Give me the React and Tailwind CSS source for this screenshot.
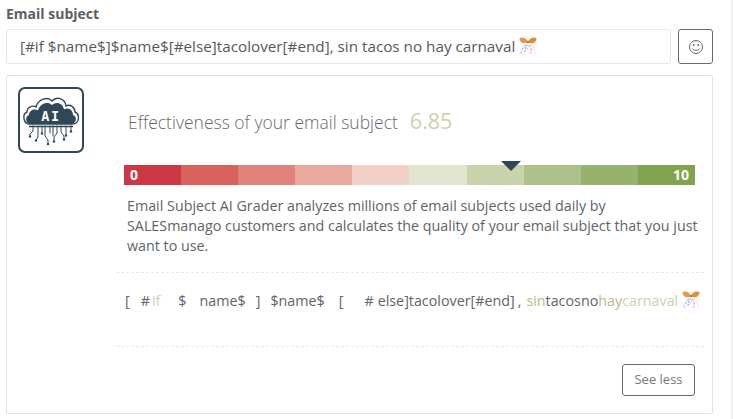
const SEGMENTS = ["bg-[#cd3846]", "bg-[#d9615e]", "bg-[#e0837a]", "bg-[#e9a99d]", "bg-[#f2d0c6]", "bg-[#e1e5cf]", "bg-[#c9d4ac]", "bg-[#afc18b]", "bg-[#97b26c]", "bg-[#7fa34e]"];

function Party({ className }) {
  return (
    <svg viewBox="0 0 18 18" className={className} fill="none">
      <path d="M9 5.500C8 1.500 4 -0.500 0.500 1.200C0.500 5 4 7.500 9 5.500Z" fill="#e39a45" />
      <path d="M9 5.500C10 1.500 14 -0.500 17.500 1.200C17.500 5 14 7.500 9 5.500Z" fill="#dd8f38" />
      <circle cx="9" cy="5" r="1.300" fill="#c07a28" />
      <path d="M7 7.500C4.500 10 2.500 13 1.500 17" stroke="#a9c5f7" strokeWidth="1.200" strokeDasharray="3 0.800" />
      <path d="M8.500 7.500C6.500 10 5.500 13 6.500 16" stroke="#7ba5f2" strokeWidth="1.100" strokeDasharray="2 1" />
      <path d="M10 7.500C12 10 13 13 11.500 17" stroke="#f6a8c0" strokeWidth="1.200" strokeDasharray="3 0.800" />
      <path d="M6 15C8 12 9.500 10 10.500 8" stroke="#f5abc2" strokeWidth="1" strokeDasharray="2 1" />
      <path d="M12 7.500C14.500 10 16 13 16.500 17" stroke="#f9cdd8" strokeWidth="1.100" strokeDasharray="1.500 1.500" />
      <circle cx="17" cy="9" r="0.700" fill="#f4d9a0" />
      <circle cx="4" cy="17.300" r="0.700" fill="#f9c0d0" />
    </svg>
  );
}

function AiLogo() {
  const c = "#2f4858";
  return (
    <div className="w-[66px] h-[66px] rounded-[7px] border-2 border-[#2f4858] shrink-0">
      <svg viewBox="2 2 62 62" className="w-[62px] h-[62px] block" fill="none">
        <path d="M12 37C5 37 4 27 9 25C9 20 15 18 18 20C20 12 30 9 34 14C38 9 47 11 48 19C52 17 57 20 57 25C62 27 62 37 54 37Z" fill="#ffffff" stroke={c} strokeWidth="1.400" />
        <path d="M12 37C7 36 7 29 11 28C11 23 17 21 20 23.500C22 16 30 14 34 18C38 14 45 16 46 22.500C50 20 55 23 55 28C59 29 59 36 54 37Z" fill={c} />
        <text x="33" y="34" textAnchor="middle" fontFamily="'DejaVu Sans Mono', monospace" fontWeight="700" fontSize="13.500" letterSpacing="1.500" fill="#ffffff">AI</text>
        <path d="M11 39.500H55" stroke={c} strokeWidth="1.300" />
        <g stroke={c} strokeWidth="1" strokeLinecap="round">
          <path d="M15 39V44L12 47V49" />
          <path d="M20 39V50L18 53" />
          <path d="M24 39V46" />
          <path d="M27 39V49L30 53V57" />
          <path d="M32 39V46" />
          <path d="M35 39V49" />
          <path d="M39 39V46L36 50V54" />
          <path d="M43 39V45L46 49V52" />
          <path d="M48 39V48" />
          <path d="M53 39V44" />
        </g>
        <g fill={c}>
          <circle cx="12" cy="49.500" r="1.200" />
          <circle cx="18" cy="53.500" r="1.200" />
          <circle cx="30" cy="57" r="1.200" />
          <circle cx="36" cy="54.500" r="1.200" />
          <circle cx="46" cy="52.500" r="1.200" />
          <circle cx="48" cy="48.500" r="1.200" />
          <circle cx="24" cy="46.500" r="1.200" />
          <circle cx="53" cy="44.500" r="1.200" />
        </g>
      </svg>
    </div>
  );
}

export default function App() {
  return (
    <div className="w-[733px] h-[419px] overflow-hidden bg-white font-['Open_Sans',sans-serif] text-[#5f6368] pl-[6px] pr-[18px] border-r-2 border-[#f3f3f5]">
      <label className="block h-[29px] pt-[4px] text-[14px] leading-[20px] font-bold text-[#5c6066]">Email subject</label>
      <div className="flex gap-[7px] h-[35px]">
        <div className="w-[665px] shrink-0 rounded-[3px] border border-[#e7e8ea] flex items-center pl-[13px] text-[15.260px] text-[#55585c] whitespace-nowrap">
          <span>[#if $name$]$name$[#else]tacolover[#end], sin tacos no hay carnaval</span>
          <Party className="w-[18px] h-[18px] ml-[4px] -mt-[1px]" />
        </div>
        <button className="w-[35px] shrink-0 rounded-[3px] border border-[#65686c] flex items-center justify-center">
          <svg viewBox="0 0 16 16" className="w-[16px] h-[16px]" fill="none" stroke="#666" strokeWidth="1">
            <circle cx="8" cy="8" r="6.500" />
            <circle cx="5.700" cy="6" r="0.600" fill="#666" />
            <circle cx="10.300" cy="6" r="0.600" fill="#666" />
            <path d="M4.300 9.500C5.500 12 10.500 12 11.700 9.500" />
          </svg>
        </button>
      </div>
      <div className="mt-[11px] w-[707px] h-[339px] rounded-[2px] border border-[#dfe2e8] flex pl-[11px] pt-[11px]">
        <AiLogo />
        <div className="ml-[22px] flex-1 min-w-0 flex flex-col items-start">
          <div className="flex items-baseline pl-[22px] mt-[18px] h-[30px] font-light">
            <span className="text-[17.500px] text-[#666a6e]">Effectiveness of your email subject</span>
            <span className="ml-[12px] text-[21.500px] font-normal text-[#c9d4ac]">6.85</span>
          </div>
          <div className="relative mt-[30px] ml-[18px] w-[571px] h-[20px] flex text-white font-bold leading-[20px]">
            {SEGMENTS.map((s) => (
              <div key={s} className={`flex-1 ${s}`} />
            ))}
            <span className="absolute left-[6px] top-0 text-[14px]">0</span>
            <span className="absolute right-[6px] top-0 text-[14px]">10</span>
            <div className="absolute left-[377px] top-[-4px] w-0 h-0 border-x-[10px] border-x-transparent border-t-[10px] border-t-[#2f4858]" />
          </div>
          <p className="ml-[21px] mt-[11px] w-[575px] text-[14.300px] leading-[20px] text-[#5f6368]">
            Email Subject AI Grader analyzes millions of email subjects used daily by SALESmanago customers and calculates the quality of your email subject that you just want to use.
          </p>
          <div className="ml-[10px] w-[588px] mt-[16px] h-[75px] border-y border-dashed border-[#e8e9eb] flex items-center pl-[9px] pb-[18px] text-[14.300px] whitespace-nowrap">
            <span>[</span>
            <span className="ml-[11px]">#</span>
            <span className="ml-[2px] text-[#c9d4ac]">if</span>
            <span className="ml-[18px]">$</span>
            <span className="ml-[13px]">name$</span>
            <span className="ml-[10px]">]</span>
            <span className="ml-[10px]">$name$</span>
            <span className="ml-[14px]">[</span>
            <span className="ml-[21px]">#</span>
            <span className="ml-[4px]">else]tacolover[#end]</span>
            <span className="ml-[3px]">,</span>
            <span className="ml-[5px] text-[#afc18b]">sin</span>
            <span>tacos</span>
            <span>no</span>
            <span className="text-[#afc18b]">hay</span>
            <span className="text-[#c9d4ac]">carnaval</span>
            <Party className="w-[18px] h-[18px] ml-[4px] -mt-[1px]" />
          </div>
          <div className="w-full flex justify-end pr-[17px] mt-[17px]">
            <button className="w-[73px] h-[32px] rounded-[3px] border border-[#65686c] text-[13px] text-[#77797d]">See less</button>
          </div>
        </div>
      </div>
    </div>
  );
}
